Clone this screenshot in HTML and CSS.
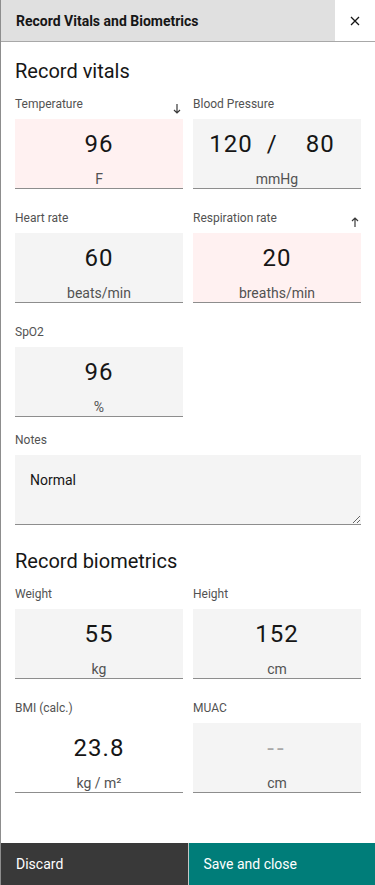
FILE: index.html
```html
<!DOCTYPE html>
<html lang="en">
<head>
    <meta charset="UTF-8">
    <meta name="viewport" content="width=device-width, initial-scale=1.0">
    <title>Record Vitals and Biometrics</title>
    <link rel="stylesheet" href="styles.css">
</head>
<body>
    <div class="panel">
        <div class="panel-header">
            <h1 class="panel-title">Record Vitals and Biometrics</h1>
            <button class="close-btn" aria-label="Close">
                <svg width="16" height="16" viewBox="0 0 16 16"><path d="M4 4 L12 12 M12 4 L4 12" stroke="#161616" stroke-width="1.3" fill="none"/></svg>
            </button>
        </div>

        <div class="panel-body">
            <h2 class="section-title">Record vitals</h2>
            <div class="field-grid">
                <div class="field">
                    <div class="field-label">
                        <span>Temperature</span>
                        <svg class="trend" width="8" height="10" viewBox="0 0 8 10"><path d="M4 0 V9 M1 6 L4 9 L7 6" stroke="#393939" stroke-width="1.2" fill="none"/></svg>
                    </div>
                    <div class="value-box abnormal">
                        <div class="value">96</div>
                        <div class="unit">F</div>
                    </div>
                </div>
                <div class="field">
                    <div class="field-label"><span>Blood Pressure</span></div>
                    <div class="value-box">
                        <div class="value bp"><span>120</span><span class="slash">/</span><span>80</span></div>
                        <div class="unit">mmHg</div>
                    </div>
                </div>
                <div class="field">
                    <div class="field-label"><span>Heart rate</span></div>
                    <div class="value-box">
                        <div class="value">60</div>
                        <div class="unit">beats/min</div>
                    </div>
                </div>
                <div class="field">
                    <div class="field-label">
                        <span>Respiration rate</span>
                        <svg class="trend up" width="8" height="10" viewBox="0 0 8 10"><path d="M4 10 V1 M1 4 L4 1 L7 4" stroke="#393939" stroke-width="1.2" fill="none"/></svg>
                    </div>
                    <div class="value-box abnormal">
                        <div class="value">20</div>
                        <div class="unit">breaths/min</div>
                    </div>
                </div>
                <div class="field">
                    <div class="field-label"><span>SpO2</span></div>
                    <div class="value-box">
                        <div class="value">96</div>
                        <div class="unit">%</div>
                    </div>
                </div>
            </div>

            <div class="notes">
                <div class="field-label"><span>Notes</span></div>
                <textarea class="notes-input">Normal</textarea>
            </div>

            <h2 class="section-title bio">Record biometrics</h2>
            <div class="field-grid">
                <div class="field">
                    <div class="field-label"><span>Weight</span></div>
                    <div class="value-box">
                        <div class="value">55</div>
                        <div class="unit">kg</div>
                    </div>
                </div>
                <div class="field">
                    <div class="field-label"><span>Height</span></div>
                    <div class="value-box">
                        <div class="value">152</div>
                        <div class="unit">cm</div>
                    </div>
                </div>
                <div class="field">
                    <div class="field-label"><span>BMI (calc.)</span></div>
                    <div class="value-box readonly">
                        <div class="value">23.8</div>
                        <div class="unit">kg / m²</div>
                    </div>
                </div>
                <div class="field">
                    <div class="field-label"><span>MUAC</span></div>
                    <div class="value-box">
                        <div class="value empty">--</div>
                        <div class="unit">cm</div>
                    </div>
                </div>
            </div>
        </div>

        <div class="panel-footer">
            <button class="btn btn-secondary">Discard</button>
            <button class="btn btn-primary">Save and close</button>
        </div>
    </div>
</body>
</html>
```

FILE: styles.css
```css
* {
    box-sizing: border-box;
}
html, body {
    margin: 0;
    padding: 0;
    height: 100%;
}
body {
    font-family: Roboto, "Noto Sans", sans-serif;
    color: #161616;
    background: white;
}
.panel {
    display: flex;
    flex-direction: column;
    height: 100vh;
    border-left: 1px solid #8d8d8d;
}
.panel-header {
    display: flex;
    align-items: stretch;
    height: 42px;
    background: #e0e0e0;
    border-bottom: 1px solid #a8a8a8;
    flex-shrink: 0;
}
.panel-title {
    flex: 1;
    margin: 0;
    padding-left: 15px;
    font-size: 14px;
    font-weight: 700;
    line-height: 42px;
}
.close-btn {
    width: 40px;
    border: none;
    background: white;
    display: flex;
    align-items: center;
    justify-content: center;
    padding: 0;
    cursor: pointer;
}
.panel-body {
    flex: 1;
    padding: 16px 14px 0 14px;
}
.section-title {
    margin: 0 0 11px 0;
    font-size: 20px;
    font-weight: 400;
    line-height: 26px;
}
.section-title.bio {
    margin-top: 23px;
}
.field-grid {
    display: grid;
    grid-template-columns: 1fr 1fr;
    column-gap: 10px;
    row-gap: 20px;
}
.field-label {
    display: flex;
    justify-content: space-between;
    align-items: flex-start;
    height: 16px;
    margin-bottom: 8px;
    font-size: 12px;
    line-height: 18px;
    color: #525252;
}
.trend {
    align-self: flex-end;
    margin-right: 2px;
    margin-bottom: -3px;
}
.trend.up {
    margin-bottom: -2px;
}
.value-box {
    height: 70px;
    background: #f4f4f4;
    border-bottom: 1px solid #8d8d8d;
    display: flex;
    flex-direction: column;
    align-items: center;
    padding-top: 8px;
}
.value-box.abnormal {
    background: #fff1f1;
}
.value-box.readonly {
    background: white;
}
.value {
    font-size: 24px;
    line-height: 34px;
    letter-spacing: 1px;
    color: #161616;
}
.value.bp {
    display: flex;
    padding-right: 10px;
}
.value.bp .slash {
    margin: 0 28px 0 14px;
}
.value.empty {
    color: #a8a8a8;
    letter-spacing: 3px;
}
.unit {
    margin-top: 9px;
    font-size: 14px;
    line-height: 18px;
    color: #525252;
}
.notes {
    margin-top: 14px;
}
.notes-input {
    display: block;
    width: 100%;
    height: 70px;
    margin: 0;
    padding: 16px 15px;
    border: none;
    border-bottom: 1px solid #8d8d8d;
    background: #f4f4f4;
    font-family: inherit;
    font-size: 14px;
    line-height: 18px;
    color: #161616;
    resize: vertical;
}
.panel-footer {
    display: flex;
    height: 42px;
    flex-shrink: 0;
}
.btn {
    flex: 1;
    border: none;
    margin: 0;
    text-align: left;
    font-family: inherit;
    font-size: 14px;
    color: white;
    cursor: pointer;
}
.btn-secondary {
    background: #393939;
    padding-left: 15px;
    border-right: 1px solid #c6c6c6;
}
.btn-primary {
    background: #007d79;
    padding-left: 15px;
}
```
